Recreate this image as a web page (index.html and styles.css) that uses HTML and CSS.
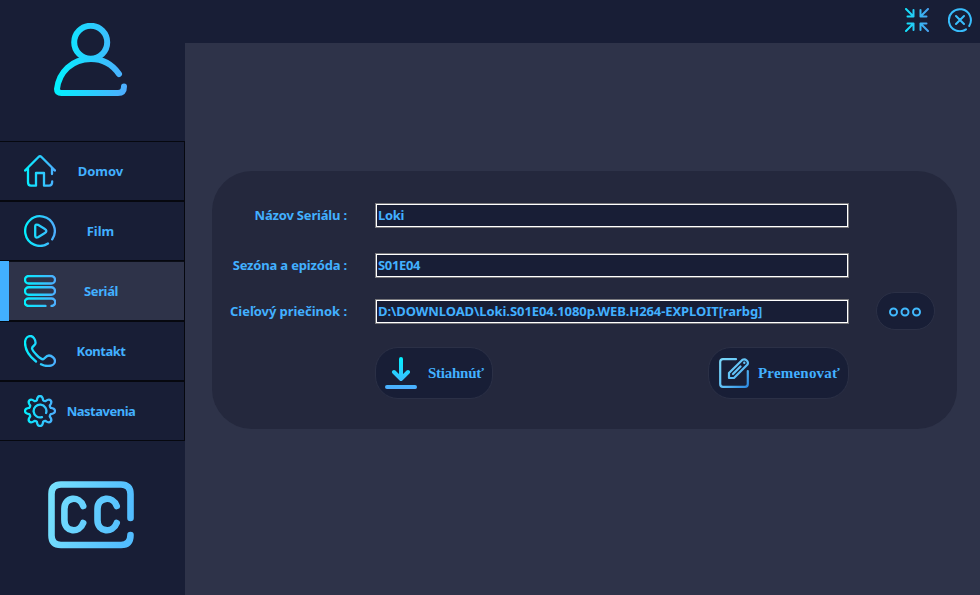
FILE: index.html
```html
<!DOCTYPE html>
<html lang="sk">
<head>
<meta charset="utf-8">
<title>Seriál</title>
<link rel="stylesheet" href="styles.css">
</head>
<body>
<svg class="defs" width="0" height="0">
  <defs>
    <linearGradient id="g32" gradientUnits="userSpaceOnUse" x1="0" y1="16" x2="32" y2="16"><stop offset="0" stop-color="#00f2fe"/><stop offset="1" stop-color="#4facfe"/></linearGradient>
    <linearGradient id="g24" gradientUnits="userSpaceOnUse" x1="0" y1="12" x2="24" y2="12"><stop offset="0" stop-color="#10e4fb"/><stop offset="1" stop-color="#4a9ff0"/></linearGradient>
    <linearGradient id="g76" gradientUnits="userSpaceOnUse" x1="0" y1="37" x2="73" y2="37"><stop offset="0" stop-color="#00f2fe"/><stop offset="1" stop-color="#4facfe"/></linearGradient>
    <linearGradient id="gcc" gradientUnits="userSpaceOnUse" x1="0" y1="0" x2="86" y2="20"><stop offset="0" stop-color="#78e2fc"/><stop offset="1" stop-color="#52bdff"/></linearGradient>
    <linearGradient id="gdown" gradientUnits="userSpaceOnUse" x1="0" y1="0" x2="0" y2="32"><stop offset="0" stop-color="#00f2fe"/><stop offset="1" stop-color="#4facfe"/></linearGradient>
    <linearGradient id="gedit" gradientUnits="userSpaceOnUse" x1="0" y1="0" x2="30" y2="30"><stop offset="0" stop-color="#7bd8f8"/><stop offset=".55" stop-color="#5fc0f7"/><stop offset="1" stop-color="#2784e0"/></linearGradient>
  </defs>
</svg>
<div class="app">
  <aside class="sidebar">
    <div class="profile">
      <svg width="74" height="74" viewBox="0 0 74 74" fill="none" stroke="url(#g76)" stroke-width="6" stroke-linecap="round" stroke-linejoin="round"><circle cx="36.700" cy="19.300" r="16.500"/><path d="M65 51C58 41 49 36 37 36C18 36 5 49 3 66Q3 70 7.500 70H64Q70 70 70 63.500"/></svg>
    </div>
    <nav class="menu">
      <a class="item"><svg width="32" height="32" viewBox="0 0 32 32" fill="none" stroke="url(#g32)" stroke-width="2.300" stroke-linecap="round" stroke-linejoin="round"><path d="M28 19V13L31 15.500L17.500 2Q16 .600 14.500 2L1 15.500L4 13.300V27Q4 30.700 7 30.700H12V18H20V30.700H25Q28.200 30.700 28.200 26.500"/></svg><span>Domov</span></a>
      <a class="item"><svg width="32" height="32" viewBox="0 0 32 32" fill="none" stroke="url(#g32)" stroke-width="2.300" stroke-linecap="round" stroke-linejoin="round"><path d="M24 28.500A14.800 14.800 0 1 1 28.200 24.400M11.200 11.500Q11.200 9 14 9.800L20.500 13.700Q24.300 16 20.500 18.300L14 22.200Q11.200 23.300 11.200 20.500Z"/></svg><span>Film</span></a>
      <a class="item active"><svg width="32" height="32" viewBox="0 0 32 32" fill="none" stroke="url(#g32)" stroke-width="2.300" stroke-linecap="round"><rect x="1" y="1" width="30" height="7.500" rx="3.750"/><rect x="1" y="12.250" width="30" height="7.500" rx="3.750"/><path d="M21.500 31H4.500A3.750 3.750 0 0 1 4.500 23.500H27.500A3.750 3.750 0 0 1 27.500 31"/></svg><span class="t-serial">Seriál</span></a>
      <a class="item"><svg width="32" height="32" viewBox="0 0 32 32" fill="none" stroke="url(#g32)" stroke-width="2.300" stroke-linecap="round" stroke-linejoin="round"><path d="M12 26.500C5 21 1 14 1 7.500C1.200 3 4 1 6.500 1C9 1 11.600 4.500 11.600 8C11.600 10.500 8 11 8 13.500C9 17 16 24 19 24.300C21 24 21.500 20.500 25 20.500C28 20.500 31 23.500 31 26C31 29 28 31 24 31Q20 31 17 29.300"/></svg><span class="t-contact">Kontakt</span></a>
      <a class="item"><svg width="32" height="32" viewBox="0 0 32 32" fill="none" stroke="url(#g32)" stroke-width="2.300" stroke-linecap="round" stroke-linejoin="round"><path d="M12.900 5.200C13.300 2.200 14 1 16 1S18.700 2.200 19.100 5.200Q20.200 6.300 21.500 6.200C23.900 4.300 25.200 4 26.600 5.400S27.700 8.100 25.800 10.500Q25.700 11.800 26.800 12.900C29.800 13.300 31 14 31 16S29.800 18.700 26.800 19.100Q25.700 20.200 25.800 21.500C27.700 23.900 28 25.200 26.600 26.600S23.900 27.700 21.500 25.800Q20.200 25.700 19.100 26.800C18.700 29.800 18 31 16 31S13.300 29.800 12.900 26.800Q11.800 25.700 10.500 25.800C8.100 27.700 6.800 28 5.400 26.600S4.300 23.900 6.200 21.500Q6.300 20.200 5.200 19.100C2.200 18.700 1 18 1 16S2.200 13.300 5.200 12.900Q6.300 11.800 6.200 10.500C4.300 8.100 4 6.800 5.400 5.400S8.100 4.300 10.500 6.200Q11.800 6.300 12.900 5.200ZM18 22.100A6.400 6.400 0 1 1 22.100 18"/></svg><span class="t-settings">Nastavenia</span></a>
    </nav>
    <div class="captions">
      <svg width="86" height="68" viewBox="0 0 86 68" fill="none" stroke="url(#gcc)" stroke-width="6.600" stroke-linecap="round"><path d="M82.500 37V13Q82.500 3.500 73 3.500H13Q3.500 3.500 3.500 13V54.500Q3.500 64 13 64H73Q82.500 64 82.500 54"/><path d="M35.200 25C31.500 14.500 16.400 15.500 16.400 28V39C16.400 51.500 31.500 52.500 35.200 42M68.700 25C65 14.500 49.500 15.500 49.500 28V39C49.500 51.500 65 52.500 68.700 42"/></svg>
    </div>
  </aside>
  <main class="main">
    <header class="topbar">
      <svg width="24" height="24" viewBox="0 0 24 24" fill="none" stroke="url(#g24)" stroke-width="2" stroke-linecap="round" stroke-linejoin="round"><path d="M1 1L8.500 8.500M2.500 8.500H8.500V2M23 1L15.500 8.500M21.500 8.500H15.500V2M1 23L8.500 15.500M2.500 15.500H8.500V22M23 23L15.500 15.500M21.500 15.500H15.500V22"/></svg>
      <svg width="24" height="24" viewBox="0 0 24 24" fill="none" stroke="#38bdfc" stroke-width="2" stroke-linecap="round"><path d="M18 21.300A11 11 0 1 1 21.200 18M8 8L16 16M16 8L8 16"/></svg>
    </header>
    <section class="card">
      <div class="row"><label class="name">Názov Seriálu :</label><div class="field short">Loki</div></div>
      <div class="row"><label class="season">Sezóna a epizóda :</label><div class="field short">S01E04</div></div>
      <div class="row folder"><label class="target">Cieľový priečinok :</label><div class="field path">D:\DOWNLOAD\Loki.S01E04.1080p.WEB.H264-EXPLOIT[rarbg]</div>
        <button class="browse"><svg width="32" height="10" viewBox="0 0 32 10" fill="none" stroke="#41b9fd" stroke-width="2"><circle cx="4.500" cy="5" r="3.500"/><circle cx="16" cy="5" r="3.500"/><circle cx="27.500" cy="5" r="3.500"/></svg></button></div>
      <div class="actions">
        <button class="download"><svg width="32" height="32" viewBox="0 0 32 32" fill="none" stroke="url(#gdown)" stroke-width="4" stroke-linecap="round" stroke-linejoin="round"><path d="M16 2V22M9 15L16 22L23 15M2 30L30 30.010"/></svg><span>Stiahnúť</span></button>
        <button class="rename"><svg width="30" height="30" viewBox="0 0 30 30" fill="none" stroke="url(#gedit)" stroke-width="2.200" stroke-linecap="round" stroke-linejoin="round"><path d="M17 1.200H4Q1.200 1.200 1.200 4V26Q1.200 28.800 4 28.800H26Q28.800 28.800 28.800 26V13M10 15L23.500 1.800C26.500 .500 30 3.500 28.500 6.500L15 20H10ZM14 16L21.500 8.500"/><circle cx="25.300" cy="4.800" r=".6" stroke-width="1.200"/></svg><span>Premenovať</span></button>
      </div>
    </section>
  </main>
</div>
</body>
</html>
```
FILE: styles.css
```css
* { box-sizing: border-box; }
body { margin: 0; background: #2e3349; color: #42b0ff; font: bold 13px/18px "Noto Sans", "Open Sans", sans-serif; overflow: hidden; }
svg { display: block; flex: none; }
.defs { position: absolute; }
.app { display: flex; width: 980px; height: 595px; }
.sidebar { width: 185px; flex: none; background: #181e36; }
.profile { height: 141px; padding: 23px 0 0 53.5px; }
.item { display: flex; align-items: center; height: 60px; padding-left: 24px; border: 1px solid #06080f; border-left: 0; }
.item span { width: 90px; text-align: center; margin: -1px 0 0 -0.5px; }
.item.active { background: #2e3349; border: 0; box-shadow: inset 9px 0 #42b0ff, inset -1px 0 #06080f, inset 0 1px #0b0e17, inset 0 -1px #06080f; }
.item .t-serial { letter-spacing: -0.35px; margin-left: 0; }
.item .t-contact { letter-spacing: -0.5px; margin-left: 0; }
.item .t-settings { letter-spacing: -0.5px; margin-left: 0; }
.captions { padding: 40px 0 0 48px; }
.main { flex: 1; min-width: 0; }
.topbar { height: 43px; background: #181e36; display: flex; justify-content: flex-end; gap: 19px; padding: 8px 8px 0 0; }
.card { width: 745px; height: 258px; margin: 128px 0 0 27px; padding-top: 32px; background: #24283d; border-radius: 40px; }
.row { display: flex; align-items: center; height: 25px; margin-bottom: 25px; }
.row label { width: 135px; text-align: right; margin: -2px 28px 0 0; white-space: nowrap; }
.row .target { margin-top: 0; letter-spacing: -0.05px; }
.name, .season { letter-spacing: -0.18px; }
.row.folder { height: 38px; margin: -11px 0 17px; }
.field { width: 474px; height: 25px; flex: none; padding: 2px 0 0 2px; border: 1px solid #77777b; box-shadow: inset 0 0 0 1px #fff; background: #181e36; white-space: nowrap; }
.folder .field { margin-top: 1px; }
.short { letter-spacing: -0.35px; }
.path { letter-spacing: -0.08px; }
button { display: flex; align-items: center; padding: 0; background: #181e36; border: 1px solid #2b3046; color: #42b0ff; font: bold 15px/18px "Liberation Serif", serif; }
.browse { width: 59px; height: 38px; margin-left: 27px; padding: 1px 1px 0 0; border-radius: 19px; justify-content: center; }
.actions { display: flex; justify-content: space-between; width: 474px; margin-left: 163px; }
.actions button { height: 52px; border-radius: 23px; }
.download { width: 118px; padding-left: 9px; gap: 11px; letter-spacing: -0.25px; }
.rename { width: 141px; padding-left: 10px; gap: 9px; letter-spacing: 0.2px; }
```
